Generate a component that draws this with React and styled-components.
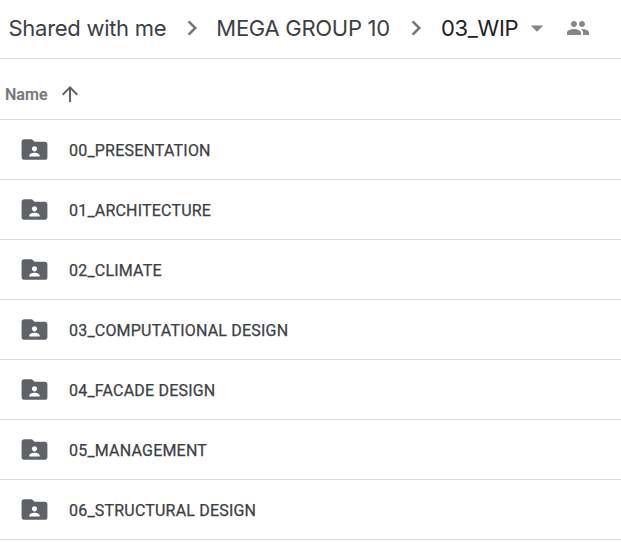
import React from 'react';
import styled, { createGlobalStyle } from 'styled-components';

const folders = [
  '00_PRESENTATION',
  '01_ARCHITECTURE',
  '02_CLIMATE',
  '03_COMPUTATIONAL DESIGN',
  '04_FACADE DESIGN',
  '05_MANAGEMENT',
  '06_STRUCTURAL DESIGN',
];

const GlobalStyle = createGlobalStyle`
  html, body {
    margin: 0;
    background: #fff;
    overflow: hidden;
  }
`;

const Page = styled.div`
  width: 621px;
  height: 543px;
  overflow: hidden;
  background: #fff;
  font-family: Roboto, "Liberation Sans", sans-serif;
`;

const Breadcrumbs = styled.div`
  display: flex;
  align-items: center;
  height: 55px;
  padding-left: 8.5px;
  padding-bottom: 3px;
  border-bottom: 1px solid #dadce0;
`;

const Crumb = styled.span`
  font-family: Inter, "Open Sans", sans-serif;
  font-size: 22px;
  letter-spacing: -0.28px;
  color: ${(p) => (p.$current ? '#202124' : '#3c4043')};
  white-space: nowrap;
`;

const Chevron = styled.svg`
  width: 30px;
  height: 30px;
  margin: 0 ${(p) => p.$gap}px 0 ${(p) => p.$lead}px;
  fill: #757575;
  flex: none;
`;

const Caret = styled.svg`
  width: 30px;
  height: 30px;
  margin-left: 4px;
  fill: #80868b;
  flex: none;
`;

const People = styled.svg`
  width: 24px;
  height: 24px;
  margin-left: 14px;
  fill: #80868b;
  flex: none;
`;

const HeaderRow = styled.div`
  display: flex;
  align-items: center;
  height: 61px;
  padding: 10px 0 0 5px;
  border-bottom: 1px solid #dadce0;
  box-sizing: border-box;
`;

const NameLabel = styled.span`
  font-size: 16px;
  font-weight: 500;
  color: #757575;
  -webkit-text-stroke: 0.2px #757575;
`;

const SortArrow = styled.svg`
  width: 24px;
  height: 24px;
  margin-left: 11px;
  fill: #5f6368;
`;

const Row = styled.div`
  display: flex;
  align-items: center;
  height: 60px;
  box-sizing: border-box;
  padding-left: 19px;
  border-bottom: 1px solid #dadce0;
`;

const FolderIcon = styled.svg`
  width: 31px;
  height: 31px;
  fill: #5f6368;
  flex: none;
`;

const FolderName = styled.span`
  margin-left: 19px;
  padding-top: 2px;
  font-size: 16px;
  font-weight: 400;
  letter-spacing: 0.2px;
  color: #3c4043;
  -webkit-text-stroke: 0.25px #3c4043;
  white-space: nowrap;
`;

const ChevronRight = (props) => (
  <Chevron viewBox="0 0 24 24" {...props}>
    <path d="M8.6 16.6 13.2 12 8.6 7.4 10 6l6 6-6 6z" />
  </Chevron>
);

const App = () => (
  <Page>
    <GlobalStyle />
    <Breadcrumbs>
      <Crumb>Shared with me</Crumb>
      <ChevronRight $lead={11} $gap={9} />
      <Crumb>MEGA GROUP 10</Crumb>
      <ChevronRight $lead={11} $gap={10} />
      <Crumb $current>03_WIP</Crumb>
      <Caret viewBox="0 0 24 24">
        <path d="M7 10l5 5 5-5z" />
      </Caret>
      <People viewBox="0 0 24 24">
        <path d="M16 11c1.66 0 2.99-1.34 2.99-3S17.66 5 16 5s-3 1.34-3 3 1.34 3 3 3zm-8 0c1.66 0 2.99-1.34 2.99-3S9.66 5 8 5 5 6.34 5 8s1.34 3 3 3zm0 2c-2.33 0-7 1.17-7 3.5V19h14v-2.5C15 14.17 10.33 13 8 13zm8 0c-.29 0-.62.02-.97.05 1.16.84 1.97 1.97 1.97 3.45V19h6v-2.5c0-2.33-4.67-3.5-7-3.5z" />
      </People>
    </Breadcrumbs>
    <HeaderRow>
      <NameLabel>Name</NameLabel>
      <SortArrow viewBox="0 0 24 24">
        <path d="M4 12l1.41 1.41L11 7.83V20h2V7.83l5.58 5.59L20 12l-8-8-8 8z" />
      </SortArrow>
    </HeaderRow>
    {folders.map((name) => (
      <Row key={name}>
        <FolderIcon viewBox="0 0 24 24">
          <path fillRule="evenodd" d="M20 6h-8l-2-2H4c-1.1 0-2 .9-2 2v12c0 1.1.9 2 2 2h16c1.1 0 2-.9 2-2V8c0-1.1-.9-2-2-2zm-8 3.5c1.1 0 2 .9 2 2s-.9 2-2 2-2-.9-2-2 .9-2 2-2zM16 17.5H8v-1c0-1.33 2.67-2 4-2s4 .67 4 2v1z" />
        </FolderIcon>
        <FolderName>{name}</FolderName>
      </Row>
    ))}
  </Page>
);

export default App;
